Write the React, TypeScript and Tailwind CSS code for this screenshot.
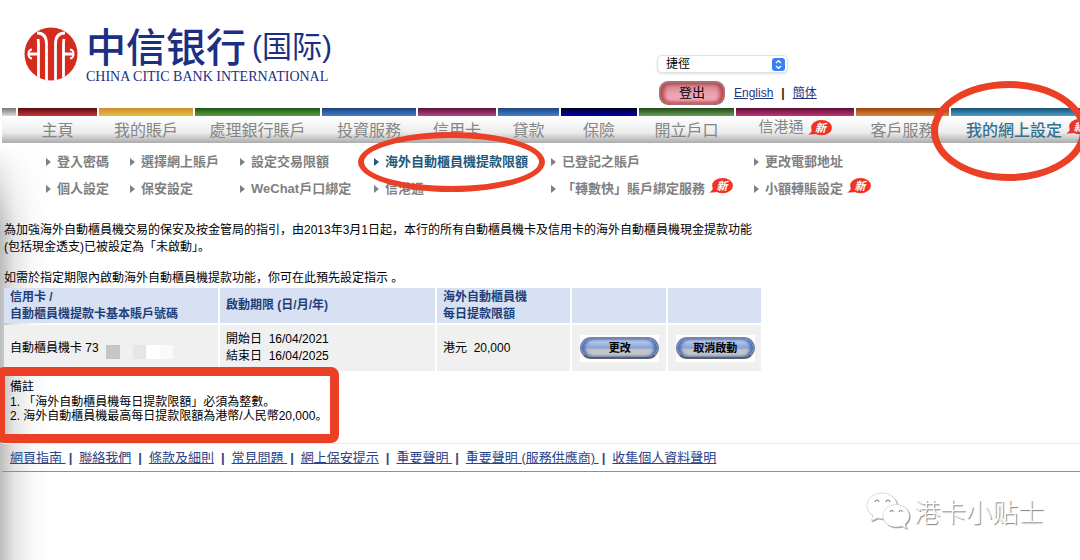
import type { ReactNode } from "react"

const navItems = [
  { label: "主頁", bar: "from-[#5c0a10] to-[#c9383c]" },
  { label: "我的賬戶", bar: "from-[#d08c30] to-[#dfc040]" },
  { label: "處理銀行賬戶", bar: "from-[#1c5412] to-[#58a040]" },
  { label: "投資服務", bar: "from-[#1c4078] to-[#4480cc]" },
  { label: "信用卡", bar: "from-[#5c1038] to-[#b84888]" },
  { label: "貸款", bar: "from-[#1c4480] to-[#4480cc]" },
  { label: "保險", bar: "from-[#000020] to-[#0000b8]" },
  { label: "開立戶口", bar: "from-[#244818] to-[#68a058]" },
  { label: "信港通", bar: "from-[#5c0c34] to-[#c03878]", isNew: true },
  { label: "客戶服務", bar: "from-[#984010] to-[#dc8838]" },
]

const subMenu = [
  { label: "登入密碼" },
  { label: "選擇網上賬戶" },
  { label: "設定交易限額" },
  { label: "海外自動櫃員機提款限額", active: true },
  { label: "已登記之賬戶" },
  { label: "更改電郵地址" },
  { label: "個人設定" },
  { label: "保安設定" },
  { label: "WeChat戶口綁定" },
  { label: "信港通" },
  { label: "「轉數快」賬戶綁定服務", isNew: true },
  { label: "小額轉賬設定", isNew: true },
]

const footerLinks = [
  "網頁指南 ",
  "聯絡我們",
  "條款及細則",
  "常見問題 ",
  "網上保安提示",
  "重要聲明 ",
  "重要聲明 (服務供應商) ",
  "收集個人資料聲明",
]

function NewBadge() {
  return (
    <span className="relative inline-flex h-4 w-6 shrink-0 items-center justify-center text-[11px] leading-4 font-bold text-white italic">
      <svg viewBox="0 0 24 16" className="absolute inset-0 h-4 w-6" fill="#ee3224">
        <ellipse cx="13.5" cy="7.7" rx="10.4" ry="7.6" />
        <path d="M4 9 Q4 12.5 0 14.5 Q6 15 10 13Z" />
      </svg>
      <span className="relative pl-0.5">新</span>
    </span>
  )
}

function Ring({ className }: { className: string }) {
  return <span aria-hidden="true" className={`pointer-events-none absolute z-20 rounded-[50%] border-[#eb4025] ${className}`} />
}

function BankLogo() {
  return (
    <a href="#" className="flex items-start gap-2 text-[#1b2f83]">
      <svg viewBox="0 0 54 54" className="h-[54px] w-[54px]">
        <defs>
          <clipPath id="disc">
            <circle cx="27" cy="27" r="26.5" />
          </clipPath>
        </defs>
        <circle cx="27" cy="27" r="26.5" fill="#d52b1e" />
        <g clipPath="url(#disc)" fill="none" stroke="#fff" strokeWidth="2.8">
          <path d="M13 6 Q22.500 6 22.500 17 V54" />
          <path d="M41 6 Q31.500 6 31.500 17 V54" />
          <path d="M14 12 Q14.500 14 14.500 18 V54" />
          <path d="M40 12 Q39.500 14 39.500 18 V54" />
          <path d="M5 27 H14 M49 27 H40" />
          <path d="M8 22.500 Q4.500 23 4.500 27 Q4.500 31 8 31.500" strokeWidth="2" />
          <path d="M46 22.500 Q49.500 23 49.500 27 Q49.500 31 46 31.500" strokeWidth="2" />
        </g>
      </svg>
      <span className="flex flex-col font-['Liberation_Sans','Noto_Sans_CJK_SC',sans-serif]">
        <span className="flex items-center whitespace-nowrap">
          <span className="text-[40px] leading-[42px] font-medium">中信银行</span>
          <span className="pb-0.5 pl-1.5 text-[30px] leading-10">(国际)</span>
        </span>
        <span className="font-['Liberation_Serif',serif] text-[14px] leading-4 whitespace-nowrap">
          CHINA CITIC BANK INTERNATIONAL
        </span>
      </span>
    </a>
  )
}

function ActionButton({ children }: { children: ReactNode }) {
  return (
    <span className="mx-auto flex h-[27px] w-[79px] items-center bg-white">
      <button
        type="button"
        className="h-[22px] w-full rounded-full border-2 border-[#7484ac] border-b-[#5c5f68] bg-linear-to-b from-[#b4c6ea] from-15% via-[#88a2d8] via-50% to-[#c4c4c4] to-60% text-[11px] leading-[18px] font-bold text-black shadow-[inset_3px_0_3px_#4c70b8,inset_-3px_0_3px_#4c70b8]"
      >
        {children}
      </button>
    </span>
  )
}

export default function App() {
  return (
    <div className="relative flex min-h-screen flex-col overflow-hidden bg-white font-['Liberation_Sans','Noto_Sans_CJK_TC',sans-serif] text-xs text-black">
      <header className="flex h-[108px] items-start pt-[27px] pl-6">
        <div className="w-[633px] shrink-0">
          <BankLogo />
        </div>
        <div className="flex flex-col gap-2 pt-7">
          <div className="relative w-[131px]">
            <select
              aria-label="捷徑"
              className="block h-[18px] w-full appearance-none rounded-[5px] border border-[#e2e2e2] bg-white pl-2 text-xs leading-4 shadow-sm"
            >
              <option>捷徑</option>
            </select>
            <svg viewBox="0 0 13 13" className="pointer-events-none absolute top-[3px] right-[3px] size-[13px]">
              <rect width="13" height="13" rx="3" fill="#3880f6" />
              <path d="M4 5 6.5 2.7 9 5M4 8 6.5 10.3 9 8" fill="none" stroke="#fff" strokeWidth="1.3" />
            </svg>
          </div>
          <div className="flex items-center text-[#1f3580]">
            <button
              type="button"
              className="ml-0.5 h-6 w-[66px] rounded-[9px] border-2 border-[#a87070] bg-linear-to-b from-[#cc8088] via-[#e8a0ac] to-[#f4b0c0] text-[13px] leading-5 text-black shadow-[inset_3px_0_4px_#b83c40,inset_-3px_0_4px_#b83c40]"
            >
              登出
            </button>
            <a href="#" className="ml-[9px] underline">English</a>
            <span className="mx-2 font-bold text-[#222]">|</span>
            <a href="#" className="underline">簡体</a>
          </div>
        </div>
      </header>

      <nav className="ml-0.5 grid h-[35px] grid-cols-[14fr_79fr_94fr_125fr_94fr_78fr_61fr_76fr_95fr_118fr_93fr_129fr] gap-x-0.5 bg-linear-to-b from-white from-25% via-[#ececec] via-70% to-[#acacac] text-base text-[#858585]">
        <div className="h-2 bg-linear-to-b from-[#777] to-[#ddd]" />
        {navItems.map((item) => (
          <a key={item.label} href="#" className="flex min-w-0 flex-col whitespace-nowrap">
            <span className={`h-2 bg-linear-to-b ${item.bar}`} />
            {item.isNew ? (
              <span className="flex h-[27px] items-center justify-center gap-1 pb-1 text-[15px]">
                {item.label}
                <NewBadge />
              </span>
            ) : (
              <span className="flex h-[27px] items-center justify-center pt-0.5">{item.label}</span>
            )}
          </a>
        ))}
        <a href="#" className="relative flex min-w-0 flex-col font-medium whitespace-nowrap text-[#33718f]">
          <span className="h-2 bg-linear-to-b from-[#185070] to-[#48a0cc]" />
          <span className="flex h-[27px] items-center gap-1 pt-0.5 pl-[15px]">
            我的網上設定
            <span className="flex pb-2">
              <NewBadge />
            </span>
          </span>
          <Ring className="-top-[27px] -left-5 h-[100px] w-[156px] border-[7px]" />
        </a>
      </nav>

      <main className="flex-1 bg-[linear-gradient(to_bottom,#fff,transparent_90px),linear-gradient(to_right,#bcbcbc,#e4e4e4_14px,#f8f8f8_32px,#fff_50px)]">
        <ul className="grid grid-cols-[84px_110px_134px_177px_203px_1fr] pt-[5px] pl-[46px] text-[13px] leading-[27px] font-bold whitespace-nowrap text-[#808080]">
          {subMenu.map((item) => (
            <li key={item.label} className={`relative flex items-center ${item.active ? "text-[#225a7c]" : ""}`}>
              <svg viewBox="0 0 5 8" className="mr-1.5 h-2 w-[5px]" fill="currentColor">
                <path d="M0 0 5 4 0 8Z" />
              </svg>
              <a href="#">{item.label}</a>
              {item.isNew && (
                <span className="mb-1.5 ml-1 flex">
                  <NewBadge />
                </span>
              )}
              {item.active && <Ring className="-top-4 -left-4 h-[60px] w-[187px] border-[6px]" />}
            </li>
          ))}
        </ul>

        <div className="mt-5 pl-1 font-['Liberation_Sans','Noto_Sans_CJK_SC',sans-serif] leading-[17px]">
          <p>
            為加強海外自動櫃員機交易的保安及按金管局的指引，由2013年3月1日起，本行的所有自動櫃員機卡及信用卡的海外自動櫃員機現金提款功能
            <br />
            (包括現金透支)已被設定為「未啟動」。
          </p>
          <p className="mt-3.5">如需於指定期限內啟動海外自動櫃員機提款功能，你可在此預先設定指示 。</p>
        </div>

        <table className="-mt-px ml-0.5 w-[761px] table-fixed border-separate border-spacing-0.5 text-left leading-[17px]">
          <thead>
            <tr className="h-[35px] bg-[#d8e1f3] text-[#1f3f78]">
              <th className="w-[214px] pl-1.5">
                信用卡 /<br />
                自動櫃員機提款卡基本賬戶號碼
              </th>
              <th className="w-[215px] pl-1.5">啟動期限 (日/月/年)</th>
              <th className="w-[133px] pl-1.5">
                海外自動櫃員機
                <br />
                每日提款限額
              </th>
              <th />
              <th />
            </tr>
          </thead>
          <tbody>
            <tr className="h-[46px] bg-[#f0f0f0]">
              <td className="pl-1.5">
                <span className="flex items-center">
                  自動櫃員機卡 73
                  <span className="mt-2 ml-[7px] flex h-3.5">
                    <span className="w-3.5 bg-[#c6c6c6]" />
                    <span className="ml-[13px] w-[13px] bg-[#e6e6e6]" />
                    <span className="w-3.5 bg-white" />
                    <span className="w-[13px] bg-[#fafafa]" />
                  </span>
                </span>
              </td>
              <td className="pl-1.5 whitespace-pre">
                開始日{"  "}16/04/2021
                <br />
                結束日{"  "}16/04/2025
              </td>
              <td className="pl-1.5 whitespace-pre">港元{"  "}20,000</td>
              <td className="pl-0.5">
                <ActionButton>更改</ActionButton>
              </td>
              <td className="pl-0.5">
                <ActionButton>取消啟動</ActionButton>
              </td>
            </tr>
          </tbody>
        </table>

        <section className="relative z-10 -mt-1.5 -ml-1 w-[343px] rounded-lg border-[9px] border-[#eb4025] pt-1 pb-[11px] pl-[5px] font-['Liberation_Sans','Noto_Sans_CJK_SC',sans-serif] leading-[14px] whitespace-nowrap">
          <p className="mb-px">備註</p>
          <p>1. 「海外自動櫃員機每日提款限額」必須為整數。</p>
          <p>2. 海外自動櫃員機最高每日提款限額為港幣/人民幣20,000。</p>
        </section>

        <footer className="ml-0.5 border-t border-b border-t-[#e6e6f4] border-b-[#8c8ca8] pl-2 text-[13px] leading-[27px] whitespace-pre text-[#2c4488]">
          {footerLinks.map((link, i) => (
            <span key={link}>
              {i > 0 && <span className={`mr-[7px] font-bold ${footerLinks[i - 1].endsWith(" ") ? "ml-[3px]" : "ml-[7px]"}`}>|</span>}
              <a href="#" className="underline">{link}</a>
            </span>
          ))}
        </footer>
      </main>

      <div className="absolute right-9 bottom-[30px] flex items-center gap-1 font-['Noto_Sans_CJK_SC',sans-serif] text-[26px] leading-9 font-light text-white [text-shadow:1px_1px_1px_#777]">
        <svg viewBox="0 0 44 38" className="h-[38px] w-11 drop-shadow-[1px_1px_0.5px_#999]" fill="#fff" stroke="#c8c8c8" strokeWidth="0.6">
          <path d="M16 1C7.500 1 1 6.500 1 13.500c0 4.300 2.300 7.800 6 10L5.500 29l6-3c5 1.500 9 .8 9 .8C29 25 31 19 31 13.500 31 6.500 24.500 1 16 1Z" />
          <path d="M30 12.500c-7.500 0-13 5-13 11.300S22.500 35 30 35c2 0 4-.3 5.500-1L40.500 36.500 39 32c2.800-2 4.300-5 4.300-8.200 0-6.300-5.800-11.300-13.300-11.300Z" />
          <g fill="none" stroke="#777" strokeWidth="1">
            <path d="M9 10a2 2 0 0 1 4 0M20 10a2 2 0 0 1 4 0M24 20a1.600 1.600 0 0 1 3.200 0M33 20a1.600 1.600 0 0 1 3.200 0" />
          </g>
        </svg>
        港卡小贴士
      </div>
    </div>
  )
}
